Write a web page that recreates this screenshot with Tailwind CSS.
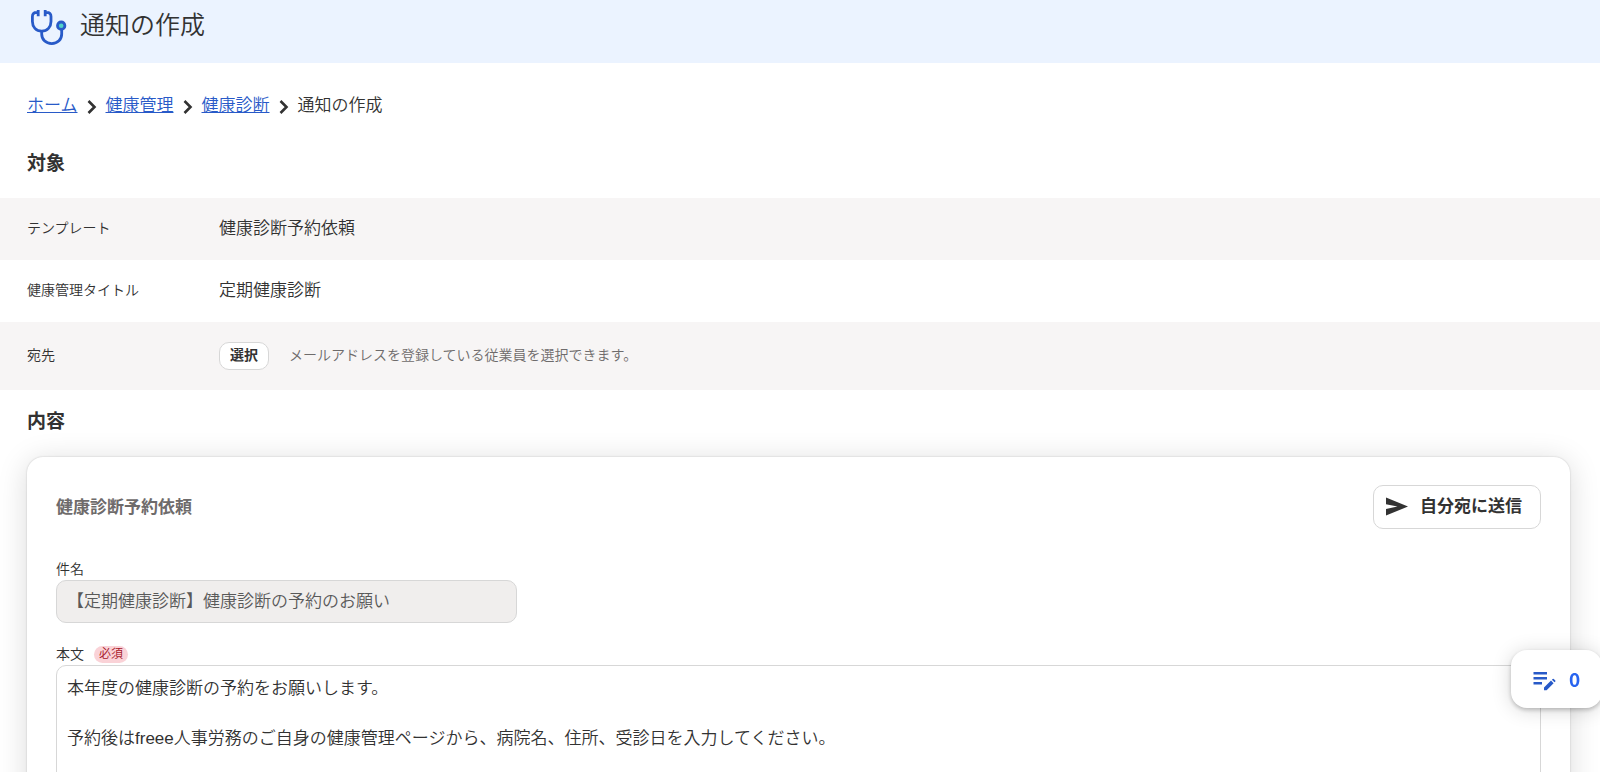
<!DOCTYPE html>
<html lang="ja">
<head>
    <meta charset="UTF-8">
    <meta name="viewport" content="width=device-width, initial-scale=1.0">
    <title>通知の作成</title>
    <script src="https://cdn.jsdelivr.net/npm/@tailwindcss/browser@4"></script>
</head>
<body class="min-h-screen overflow-x-hidden bg-white text-[17px] leading-[25px] font-[350] text-[#323232] font-['Liberation_Sans','Noto_Sans_CJK_JP',sans-serif]">

    <header class="flex h-[63px] items-start gap-3 bg-[#ebf3ff] px-[30px] pt-2">
        <svg class="h-[38px] w-[38px]" viewBox="0 0 38 38" fill="none" stroke="#285ac8" stroke-width="2.8">
            <path d="M8.200 2v6.200M8.200 4.300H6.800C4 4.300 2.400 6 2.400 8.500V13.500C2.400 19 6 23.200 11.700 23.200S21 19 21 13.500V8.500C21 6 19.400 4.300 16.600 4.300H15.200M15.200 2v6.200" />
            <path d="M11.700 23.200V26C11.700 31.500 15.700 35.600 21.700 35.600S31.700 31.500 31.700 26V21.500" />
            <circle cx="31.200" cy="17.700" r="3.700" fill="#50d2c8" />
        </svg>
        <h1 class="text-[25px] leading-[34px] font-[350]">通知の作成</h1>
    </header>

    <nav aria-label="パンくず" class="px-[27px] pt-[30px]">
        <ol class="flex items-center gap-2">
            <li><a href="#" class="text-[#285ac8] underline">ホーム</a></li>
            <li aria-hidden="true"><svg class="h-4 w-3" viewBox="0 0 12 16" fill="none" stroke="#323232" stroke-width="2.600"><path d="M2.500 3l6 6-6 6" /></svg></li>
            <li><a href="#" class="text-[#285ac8] underline">健康管理</a></li>
            <li aria-hidden="true"><svg class="h-4 w-3" viewBox="0 0 12 16" fill="none" stroke="#323232" stroke-width="2.600"><path d="M2.500 3l6 6-6 6" /></svg></li>
            <li><a href="#" class="text-[#285ac8] underline">健康診断</a></li>
            <li aria-hidden="true"><svg class="h-4 w-3" viewBox="0 0 12 16" fill="none" stroke="#323232" stroke-width="2.600"><path d="M2.500 3l6 6-6 6" /></svg></li>
            <li aria-current="page">通知の作成</li>
        </ol>
    </nav>

    <main>
        <h2 class="px-[27px] pt-[31px] pb-[19px] text-[19px] leading-[30px] font-bold">対象</h2>

        <table class="w-full text-left">
            <tbody>
                <tr class="h-[62px] bg-[#f7f5f5]">
                    <th scope="row" class="w-[219px] pb-[2px] pl-[27px] text-sm font-[350]">テンプレート</th>
                    <td class="pb-[2px]">健康診断予約依頼</td>
                </tr>
                <tr class="h-[62px]">
                    <th scope="row" class="w-[219px] pb-[2px] pl-[27px] text-sm font-[350]">健康管理タイトル</th>
                    <td class="pb-[2px]">定期健康診断</td>
                </tr>
                <tr class="h-[68px] bg-[#f7f5f5]">
                    <th scope="row" class="w-[219px] pb-[2px] pl-[27px] text-sm font-[350]">宛先</th>
                    <td>
                        <div class="flex items-center gap-5">
                            <button type="button" class="h-7 w-[50px] rounded-[10px] border border-[#d7d7d7] bg-white pb-[2px] text-sm font-bold">選択</button>
                            <p class="pb-[2px] text-sm text-[#6e6b6b]">メールアドレスを登録している従業員を選択できます。</p>
                        </div>
                    </td>
                </tr>
            </tbody>
        </table>

        <h2 class="px-[27px] pt-[17px] pb-5 text-[19px] leading-[30px] font-bold">内容</h2>

        <section class="mr-[30px] ml-[27px] rounded-2xl bg-white px-[29px] pt-7 pb-[29px] shadow-[0_0_2px_rgba(0,0,0,0.2),0_4px_30px_rgba(0,0,0,0.15)]">
            <div class="flex items-center justify-between">
                <h3 class="font-bold text-[#6e6b6b]">健康診断予約依頼</h3>
                <button type="button" class="flex h-11 items-center gap-3 rounded-[10px] border border-[#d7d7d7] bg-white pr-[18px] pl-3 font-bold">
                    <svg class="h-6 w-[22px]" viewBox="0 0 23 24" fill="#323232"><path d="M0 2L23 11.500 0 21V14L12 11.500 0 9z" /></svg>
                    <span class="pb-[2px]">自分宛に送信</span>
                </button>
            </div>

            <div class="pt-[29px]">
                <label for="subject" class="block text-sm leading-[22px]">件名</label>
                <input id="subject" type="text" disabled value="【定期健康診断】健康診断の予約のお願い" class="h-[43px] w-[461px] rounded-[10px] border border-[#d7d7d7] bg-[#f0eeed] px-[10px] pb-1 text-[#595959]">
            </div>

            <div class="pt-5">
                <div class="flex items-center gap-[10px]">
                    <label for="body" class="text-sm leading-[22px]">本文</label>
                    <span class="rounded-full bg-[#fad2d7] px-[5px] text-xs leading-[17px] text-[#a51428]">必須</span>
                </div>
                <textarea id="body" rows="10" class="block w-full resize-none rounded-[10px] border border-[#d7d7d7] px-[10px] py-[10px]">本年度の健康診断の予約をお願いします。

予約後はfreee人事労務のご自身の健康管理ページから、病院名、住所、受診日を入力してください。</textarea>
            </div>
        </section>
    </main>

    <button type="button" aria-label="メモ" class="fixed right-[-2px] bottom-16 flex h-[58px] w-[91px] items-center gap-3 rounded-2xl bg-white pl-[22px] shadow-[0_2px_4px_rgba(0,0,0,0.22),0_2px_20px_rgba(0,0,0,0.16)]">
        <svg class="h-6 w-6" viewBox="0 0 24 24" fill="#285ac8">
            <path d="M0.500 5H14v2.400H0.500zM0.500 10H14v2.400H0.500zM0.500 15H9v2.400H0.500z" />
            <path d="M11 20.600L18 13.600l2.600 2.600-7 7H11zM18.900 12.700l0.800-0.800a0.800 0.800 0 0 1 1.100 0l1.500 1.500a0.800 0.800 0 0 1 0 1.100l-0.800 0.800z" />
        </svg>
        <span class="pb-[2px] text-[19px] leading-[25px] font-bold text-[#2864f0] font-['Noto_Sans_CJK_JP',sans-serif]">0</span>
    </button>
</body>
</html>
